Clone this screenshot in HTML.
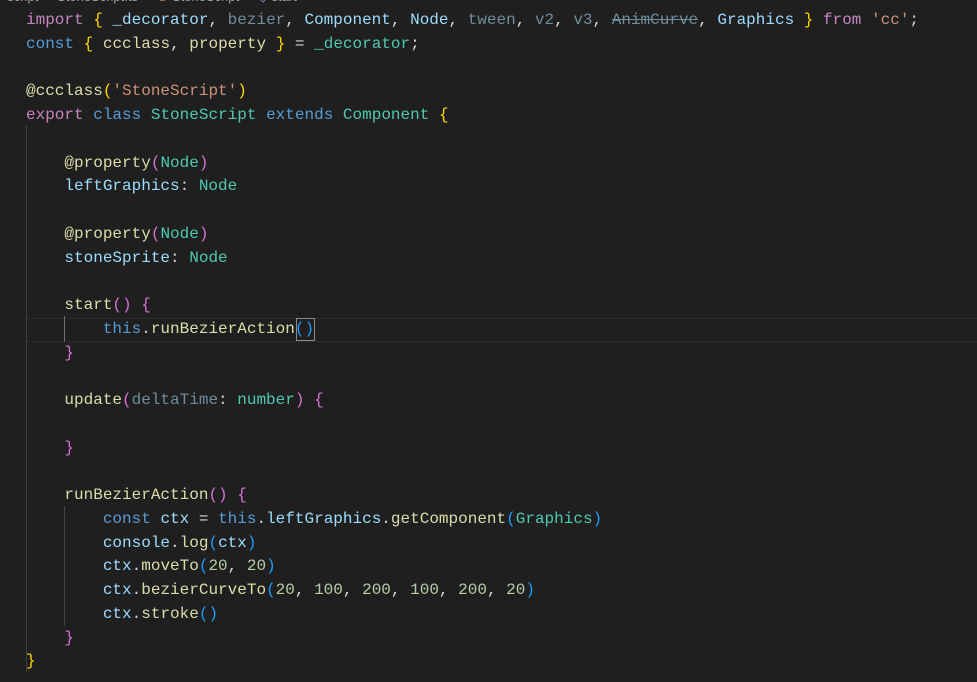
<!DOCTYPE html>
<html><head><meta charset="utf-8"><style>
html,body{margin:0;padding:0;background:#1f1f1f;width:977px;height:682px;overflow:hidden}
.c{position:absolute;left:26px;top:9px;font-family:"Liberation Mono",monospace;font-size:16px;line-height:23.75px;color:#d4d4d4;white-space:pre}
.k{color:#c586c0}.b{color:#569cd6}.v{color:#9cdcfe}.t{color:#4ec9b0}.f{color:#dcdcaa}.s{color:#ce9178}.n{color:#b5cea8}
.y{color:#ffd700}.p{color:#da70d6}.l{color:#179fff}.d{color:#6f8c9c}.st{text-decoration:line-through}
.g{position:absolute;width:1px;background:#404040}
</style></head><body>
<div style="position:absolute;left:0;top:-11px;font-family:'Liberation Sans',sans-serif;font-size:13px;color:#a0a0a0;white-space:pre">  script  ›  StoneScript.ts  ›  <span style="color:#e8a060">⚇</span> StoneScript  ›  <span style="color:#b180d7">◈</span> start</div>
<div style="position:absolute;left:26px;top:318px;width:951px;height:22px;border-top:1px solid #2c2c2c;border-bottom:1px solid #2c2c2c"></div>
<div style="position:absolute;left:296px;top:318px;width:17px;height:21px;border:1px solid #8a8a8a"></div>
<div class="g" style="left:26px;top:126px;height:546px"></div>
<div class="g" style="left:64px;top:316px;height:26px;background:#707070"></div>
<div class="g" style="left:64px;top:506px;height:120px"></div>
<div class="c"><span class="k">import</span> <span class="y">{</span> <span class="v">_decorator</span>, <span class="d">bezier</span>, <span class="v">Component</span>, <span class="v">Node</span>, <span class="d">tween</span>, <span class="d">v2</span>, <span class="d">v3</span>, <span class="d st">AnimCurve</span>, <span class="v">Graphics</span> <span class="y">}</span> <span class="k">from</span> <span class="s">'cc'</span>;
<span class="b">const</span> <span class="y">{</span> <span class="f">ccclass</span>, <span class="f">property</span> <span class="y">}</span> = <span class="t">_decorator</span>;

<span class="f">@ccclass</span><span class="y">(</span><span class="s">'StoneScript'</span><span class="y">)</span>
<span class="k">export</span> <span class="b">class</span> <span class="t">StoneScript</span> <span class="b">extends</span> <span class="t">Component</span> <span class="y">{</span>

    <span class="f">@property</span><span class="p">(</span><span class="t">Node</span><span class="p">)</span>
    <span class="v">leftGraphics</span>: <span class="t">Node</span>

    <span class="f">@property</span><span class="p">(</span><span class="t">Node</span><span class="p">)</span>
    <span class="v">stoneSprite</span>: <span class="t">Node</span>

    <span class="f">start</span><span class="p">()</span> <span class="p">{</span>
        <span class="b">this</span>.<span class="f">runBezierAction</span><span class="l">()</span>
    <span class="p">}</span>

    <span class="f">update</span><span class="p">(</span><span class="d">deltaTime</span>: <span class="t">number</span><span class="p">)</span> <span class="p">{</span>

    <span class="p">}</span>

    <span class="f">runBezierAction</span><span class="p">()</span> <span class="p">{</span>
        <span class="b">const</span> <span class="v">ctx</span> = <span class="b">this</span>.<span class="v">leftGraphics</span>.<span class="f">getComponent</span><span class="l">(</span><span class="t">Graphics</span><span class="l">)</span>
        <span class="v">console</span>.<span class="f">log</span><span class="l">(</span><span class="v">ctx</span><span class="l">)</span>
        <span class="v">ctx</span>.<span class="f">moveTo</span><span class="l">(</span><span class="n">20</span>, <span class="n">20</span><span class="l">)</span>
        <span class="v">ctx</span>.<span class="f">bezierCurveTo</span><span class="l">(</span><span class="n">20</span>, <span class="n">100</span>, <span class="n">200</span>, <span class="n">100</span>, <span class="n">200</span>, <span class="n">20</span><span class="l">)</span>
        <span class="v">ctx</span>.<span class="f">stroke</span><span class="l">()</span>
    <span class="p">}</span>
<span class="y">}</span></div>
</body></html>
